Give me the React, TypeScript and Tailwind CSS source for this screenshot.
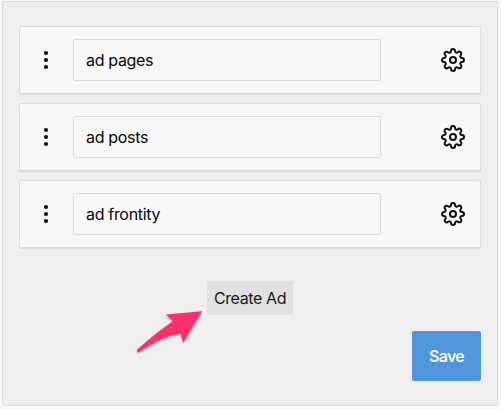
import { FiSettings } from 'react-icons/fi';

const ads = ['ad pages', 'ad posts', 'ad frontity'];

function DragHandle() {
  return (
    <svg width="6" height="20" viewBox="0 0 6 20" fill="#111">
      <circle cx="3" cy="3" r="2.1" />
      <circle cx="3" cy="10" r="2.1" />
      <circle cx="3" cy="17" r="2.1" />
    </svg>
  );
}

function AdRow({ name }: { name: string }) {
  return (
    <div className="flex h-[69px] items-center rounded-[2px] border border-b-2 border-[#dcdcdc] bg-[#f8f8f8] pl-[23px] pr-[15px]">
      <DragHandle />
      <input
        defaultValue={name}
        className="ml-6 h-[42px] w-[308px] rounded-[2px] border border-[#dcdcdc] bg-[#f8f8f8] px-3 text-[16px] tracking-[-0.32px] text-[#080808] outline-none"
      />
      <button className="ml-auto text-[#111]" aria-label="Settings">
        <FiSettings size={24} />
      </button>
    </div>
  );
}

function Pointer() {
  return (
    <svg
      className="absolute left-[130px] top-[304px] drop-shadow-[0_1px_1px_rgba(0,0,0,0.4)]"
      width="80"
      height="56"
      viewBox="130 304 80 56"
    >
      <path
        d="M202 311.3L166.2 314.6L173 321.2Q157 332 137.3 349.6Q136.3 352 138.8 352Q162 336.5 180.5 333.2L183.2 342.5Z"
        fill="#ff2e6c"
      />
    </svg>
  );
}

export default function App() {
  return (
    <div className="relative h-[409px] w-[501px] bg-[#f8f8f8] pl-[2px] pt-px font-['Inter','Liberation_Sans',sans-serif]">
      <div className="flex h-[405px] w-[496px] flex-col rounded-[2px] border border-[#dcdcdc] bg-[#efefef] px-4 pt-6">
        <div className="flex flex-col gap-2">
          {ads.map((name) => (
            <AdRow key={name} name={name} />
          ))}
        </div>
        <button className="mt-8 h-[34px] w-[86px] self-center whitespace-nowrap rounded-[2px] bg-[#e1e1e1] text-[16px] tracking-[-0.4px] text-[#1a1a1a]">
          Create Ad
        </button>
        <button className="mt-4 h-[50px] w-[69px] self-end rounded-[2px] bg-[#4f96db] text-[16px] font-semibold tracking-[-0.7px] text-[#f8f8f8]">
          Save
        </button>
      </div>
      <Pointer />
    </div>
  );
}
